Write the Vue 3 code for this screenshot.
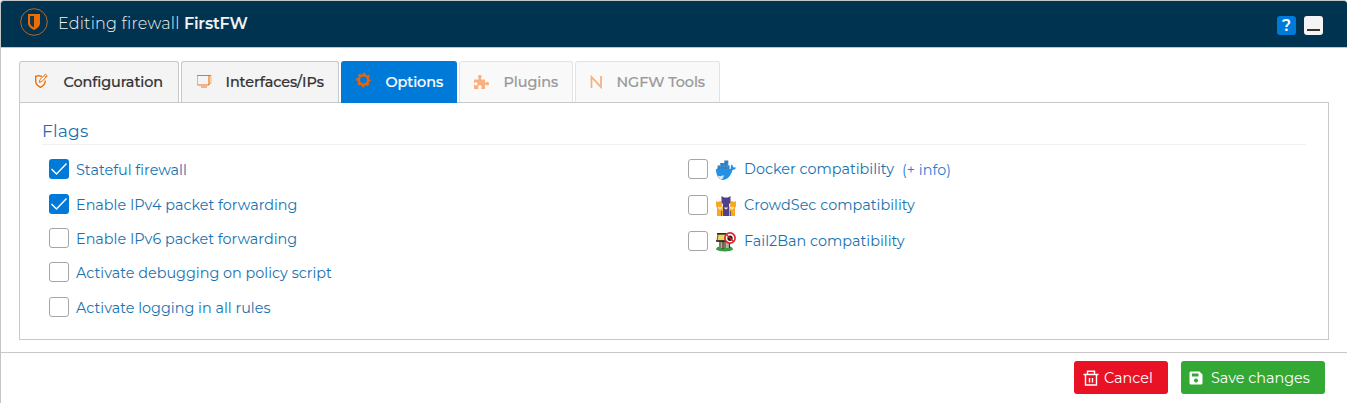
<script setup>
import { ref } from 'vue'

const tabs = [
  { id: 'configuration', label: 'Configuration' },
  { id: 'interfaces', label: 'Interfaces/IPs' },
  { id: 'options', label: 'Options', active: true },
  { id: 'plugins', label: 'Plugins', disabled: true },
  { id: 'ngfw', label: 'NGFW Tools', disabled: true },
]
const flags = ref([
  { id: 'stateful', label: 'Stateful firewall', on: true },
  { id: 'ipv4', label: 'Enable IPv4 packet forwarding', on: true },
  { id: 'ipv6', label: 'Enable IPv6 packet forwarding', on: false },
  { id: 'debug', label: 'Activate debugging on policy script', on: false },
  { id: 'logging', label: 'Activate logging in all rules', on: false },
])
const compat = ref([
  { id: 'docker', label: 'Docker compatibility', info: true, on: false },
  { id: 'crowdsec', label: 'CrowdSec compatibility', on: false },
  { id: 'fail2ban', label: 'Fail2Ban compatibility', on: false },
])
</script>

<template>
  <div class="dialog">
    <header class="titlebar">
      <svg class="logo" viewBox="0 0 28 28">
        <circle cx="14" cy="14" r="13.3" fill="none" stroke="#b96526" stroke-width="1" />
        <path d="M8 6h12v9c0 3.500-3 5.500-6 7-3-1.500-6-3.500-6-7z" fill="#ef6c00" />
        <path d="M10 8h4v11.500c-2.300-1.300-4-2.600-4-4.700z" fill="#17364a" />
      </svg>
      <h1 class="title">Editing firewall <b>FirstFW</b></h1>
      <button class="tool help">?</button>
      <button class="tool minimize"><i></i></button>
    </header>

    <main class="body">
      <nav class="tabs">
        <button v-for="t in tabs" :key="t.id" class="tab" :class="[t.id, { active: t.active, disabled: t.disabled }]">
          <svg v-if="t.id === 'configuration'" class="ticon" viewBox="0 0 16 16" fill="none" stroke="#ef6c00" stroke-width="1.400">
            <path d="M8 3.300C6.500 3.300 5 2.800 4.500 2.500 3.500 3.200 2.700 3.300 1.700 3.300V8c0 3.500 2 5 4.800 6.300C9.300 13 11.200 11.500 11.300 7.500" />
            <path d="M5.300 9.300l.7-2.800L11.500 1.200l1.800 1.700-5.400 5.600zM10.300 2.500l1.700 1.700" stroke-width="1" />
          </svg>
          <svg v-else-if="t.id === 'interfaces'" class="ticon" viewBox="0 0 16 16" fill="none">
            <path d="M1.500 2.500v9.500M15 2.500v7.500l-2 1.500" stroke="#f8b64c" stroke-width="1" />
            <path d="M1 2.500h14M13 3v9M1.500 12H13M5 14h6" stroke="#ee7420" stroke-width="1.200" />
          </svg>
          <svg v-else-if="t.id === 'options'" class="ticon" viewBox="0 0 16 16">
            <circle cx="7.500" cy="8" r="4.700" fill="none" stroke="#e8650a" stroke-width="2.500" />
            <circle cx="7.500" cy="8" r="6.400" fill="none" stroke="#e8650a" stroke-width="1.800" stroke-dasharray="2.500 2.527" stroke-dashoffset="1.250" />
          </svg>
          <svg v-else-if="t.id === 'plugins'" class="ticon" viewBox="0 0 16 16" fill="#f7b17e">
            <path d="M1 5.500h4.500c.7-1-.5-1.500-.5-2.800C5 1.500 5.800 1 6.800 1s1.800.5 1.800 1.700c0 1.200-1.300 1.800-.5 2.800H12v3c1 .8 1.300-.4 2.500-.4 1 0 1.500.8 1.500 1.700s-.5 1.700-1.500 1.700c-1.200 0-1.500-1.200-2.500-.5v4H8.200c-.6-.9.500-1.200.5-2.200 0-1-.8-1.500-1.800-1.500s-1.800.5-1.800 1.500 1 1.300.4 2.200H1v-4c.8-.6 1.100.5 2 .5 1 0 1.500-.8 1.500-1.500S4 8.300 3 8.300c-.9 0-1.200 1-2 .4z" />
          </svg>
          <svg v-else class="ticon" viewBox="0 0 16 16" fill="none" stroke="#f8ae79" stroke-width="1.700">
            <path d="M1.500 14V3L11 13V2" />
          </svg>
          <span>{{ t.label }}</span>
        </button>
      </nav>

      <section class="panel">
        <h2 class="legend"><span>Flags</span></h2>
        <div class="columns">
          <div class="column left">
            <label v-for="f in flags" :key="f.id" class="row" :class="f.id">
              <span class="box" :class="{ on: f.on }">
                <svg v-if="f.on" viewBox="0 0 20 20"><path d="M2.500 10l5 5L17.500 4.500" fill="none" stroke="#fff" stroke-width="1.400" /></svg>
              </span>
              <span class="text">{{ f.label }}</span>
            </label>
          </div>
          <div class="column right">
            <label v-for="c in compat" :key="c.id" class="row" :class="c.id">
              <span class="box" :class="{ on: c.on }"></span>
              <svg v-if="c.id === 'docker'" class="brand" viewBox="0 0 20 20">
                <path d="M2 5.500h2.300V3h4V.5h4V5.500H13.500V9.500H1z" fill="#2f7fc0" />
                <path d="M0 9h14.500c.7-1-.2-3 1-4.500 1.200.7 1.600 1.800 1.600 2.800 1.200-.3 2.200 0 2.900.5-.7 1.700-2 2.200-3.500 2.200C15 16 11 20 6.500 20 2 19 0 15 0 9z" fill="#2391e6" />
                <path d="M1.500 15.500c2 1 4.500.8 6-.5.500 2-.5 4-2 4.500-2-.6-3.300-2-4-4z" fill="#d5ebfa" />
                <path d="M4.500 3v6M8 3v6M11.500 3v6M1 6h13" stroke="#4aa0dd" stroke-width=".5" />
              </svg>
              <svg v-else-if="c.id === 'crowdsec'" class="brand" viewBox="0 0 20 20">
                <path d="M0 5l2 1 2-1 2 1v4l-1 2v8H1v-8l-1-2zM20 5l-2 1-2-1-2 1v4l1 2v8h4v-8l1-2z" fill="#f8a91f" />
                <path d="M5.500 0L8 1.500h4l2.500-1.500v6L13 8.500V20H7V8.500L5.500 6z" fill="#4d408f" />
                <path d="M3.500 12l3.500-2v10H3.500zM16.500 12L13 10v10h3.500z" fill="#f8a91f" />
                <path d="M2 10.500l2 1 2-1 .5 2H5l-1 1.500-1-1.500H2zM14 10.500l2 1 2-1v2h-1l-1 1.500-1-1.500h-1.500zM8.500 11l1.500.7 1.500-.7v1.500l-1.500 1-1.500-1z" fill="#f3e9df" />
                <path d="M5.500 15v5M14.500 15v5" stroke="#4d408f" stroke-width=".8" />
              </svg>
              <svg v-else class="brand" viewBox="0 0 20 20">
                <path d="M0 17.500c0-2 2-3 4-3h9c2 0 4 1 4 3-2 2.500-14 2.500-17 0z" fill="#3d9a42" />
                <path d="M3 9h11v7H3z" fill="#80776a" />
                <path d="M5 10.500h3V16H5zM10 10.500h3V16h-3z" fill="#b9b3a2" />
                <path d="M7 9v8M13.500 9v7" stroke="#39342a" stroke-width="1.200" />
                <path d="M2 2h9l2 7H1z" fill="#f2d45a" stroke="#3e3520" stroke-width=".8" />
                <path d="M1 1.800h9M0 9h14" stroke="#2d271d" stroke-width="1.400" />
                <circle cx="14" cy="6" r="5.100" fill="#fff" stroke="#da252c" stroke-width="1.700" />
                <ellipse cx="14" cy="6.200" rx="2.600" ry="2.700" fill="#25191d" />
                <path d="M10.500 2.500l7 7" stroke="#da252c" stroke-width="1.300" />
              </svg>
              <span class="text">{{ c.label }}</span>
              <a v-if="c.info" class="info">(+ info)</a>
            </label>
          </div>
        </div>
      </section>
    </main>

    <footer class="footer">
      <button class="btn cancel">
        <svg viewBox="0 0 16 16" fill="none" stroke="#fff" stroke-width="1.400">
          <path d="M.5 4.500h15M4.500 4.500V1.200h7v3.300M2.500 4.500V15h11V4.500M6.500 8v4.500M9.500 8v4.500" />
        </svg>
        <span>Cancel</span>
      </button>
      <button class="btn save">
        <svg viewBox="0 0 14 14">
          <path fill-rule="evenodd" d="M1.500 .5h9L13.500 3.500v8.500a1.500 1.500 0 0 1-1.500 1.500H2A1.500 1.500 0 0 1 .5 12V1.500zM3 2.500v3h6.500v-3zM7 7.500a2 2 0 1 0 .01 0z" fill="#fff" />
        </svg>
        <span>Save changes</span>
      </button>
    </footer>
  </div>
</template>

<style>
body { margin: 0; background: #fff; overflow: hidden; }
</style>

<style scoped>
* { box-sizing: border-box; }
.dialog {
  display: flex; flex-direction: column; width: 1347px; height: 403px;
  border: 1px solid #c3c5c6; border-width: 1px 0 0 1px; border-radius: 3px 3px 0 0;
  font-family: Montserrat, Inter, "Open Sans", sans-serif; font-size: 14.400px;
}
button { font-family: inherit; margin: 0; }
.titlebar {
  display: flex; align-items: center; height: 47px; padding: 0 24px 0 19px;
  background: #003350; border-bottom: 1px solid #c5c5c5; border-radius: 3px 3px 0 0; color: #f2f2f2;
}
.logo { width: 28px; height: 28px; margin-top: -5px; }
.title { flex: 1; margin: -1px 0 0 10px; font-size: 16px; font-weight: 300; line-height: 20px; white-space: nowrap; letter-spacing: .24px; }
.title b { font-weight: 600; letter-spacing: -.2px; }
.tool { width: 19px; height: 19px; margin: 3px 0 0 8px; padding: 0; border: 0; border-radius: 3px; }
.help { background: #007ad9; color: #fff; font-size: 16px; font-weight: 600; line-height: 17px; }
.minimize { display: flex; justify-content: center; background: #f4f4f4; }
.minimize i { width: 13px; height: 2px; margin-top: 13px; background: #333; }
.body { padding: 13px 18px 0; }
.tabs { display: flex; gap: 2px; height: 41px; }
.tab {
  display: flex; align-items: center; height: 41px; padding: 0 0 0 14px;
  border: 1px solid #c8c8c8; border-bottom: 0; border-radius: 3px 3px 0 0; background: #f4f4f4;
  color: #333; font-size: 14.400px; font-weight: 500; white-space: nowrap; letter-spacing: -.07px;
}
.tab span { line-height: 20px; -webkit-text-stroke: .2px currentColor; }
.configuration { width: 160px; }
.interfaces { width: 158px; }
.options { width: 116px; }
.plugins { width: 114px; }
.ngfw { width: 145px; }
.tab.active { height: 42px; padding-bottom: 2px; background: #007ad9; border-color: #007ad9; color: #fff; z-index: 1; }
.tab.disabled { background: #f9f9f9; border-color: #e3e3e3; color: #999; }
.ticon { flex: none; width: 16px; height: 16px; margin: -3px 13.500px 0 0; }
.plugins .ticon { margin: 0 14.500px 0 -1px; }
.ngfw .ticon { margin: 0 10.500px 0 0; }
.panel { height: 238px; padding: 17px 22px 0; border: 1px solid #c8c8c8; }
.legend { height: 25px; margin: 0; border-bottom: 1px solid #f0f0f0; color: #1a70ac; font-size: 17px; font-weight: 400; line-height: 22px; letter-spacing: .25px; }
.columns { display: grid; grid-template-columns: 639px 1fr; }
.column { display: flex; flex-direction: column; gap: 14px; padding: 14px 0 0 7px; }
.left .ipv4, .left .logging { margin-top: 1px; }
.left .text { padding-top: 2px; }
.column.right { gap: 16px; }
.row { display: flex; align-items: center; height: 20px; color: #1872b0; white-space: nowrap; }
.box { flex: none; width: 20px; height: 20px; border: 1px solid #a6a6a6; border-radius: 3px; background: #fff; }
.box.on { border: 0; background: #007ad9; }
.box svg { display: block; width: 20px; height: 20px; }
.text { margin-left: 7px; line-height: 20px; }
.brand { flex: none; width: 20px; height: 20px; margin: 2px 0 0 8px; }
.right .text { margin-left: 8px; }
.info { margin: 2px 0 0 8px; color: #2680cf; }
.footer { display: flex; justify-content: flex-end; gap: 13px; height: 51px; margin-top: 12px; padding: 8px 22px 0 0; border-top: 1px solid #c8c8c8; }
.btn { display: flex; align-items: center; height: 33px; padding: 0; border: 0; border-radius: 3px; color: #fff; font-size: 14.400px; font-weight: 400; white-space: nowrap; }
.cancel { width: 94px; padding-left: 9px; background: #e91224; }
.save { width: 144px; padding-left: 8px; background: #34a835; }
.cancel svg { width: 16px; height: 16px; margin-right: 5px; }
.save svg { width: 14px; height: 14px; margin-right: 8px; }
</style>
